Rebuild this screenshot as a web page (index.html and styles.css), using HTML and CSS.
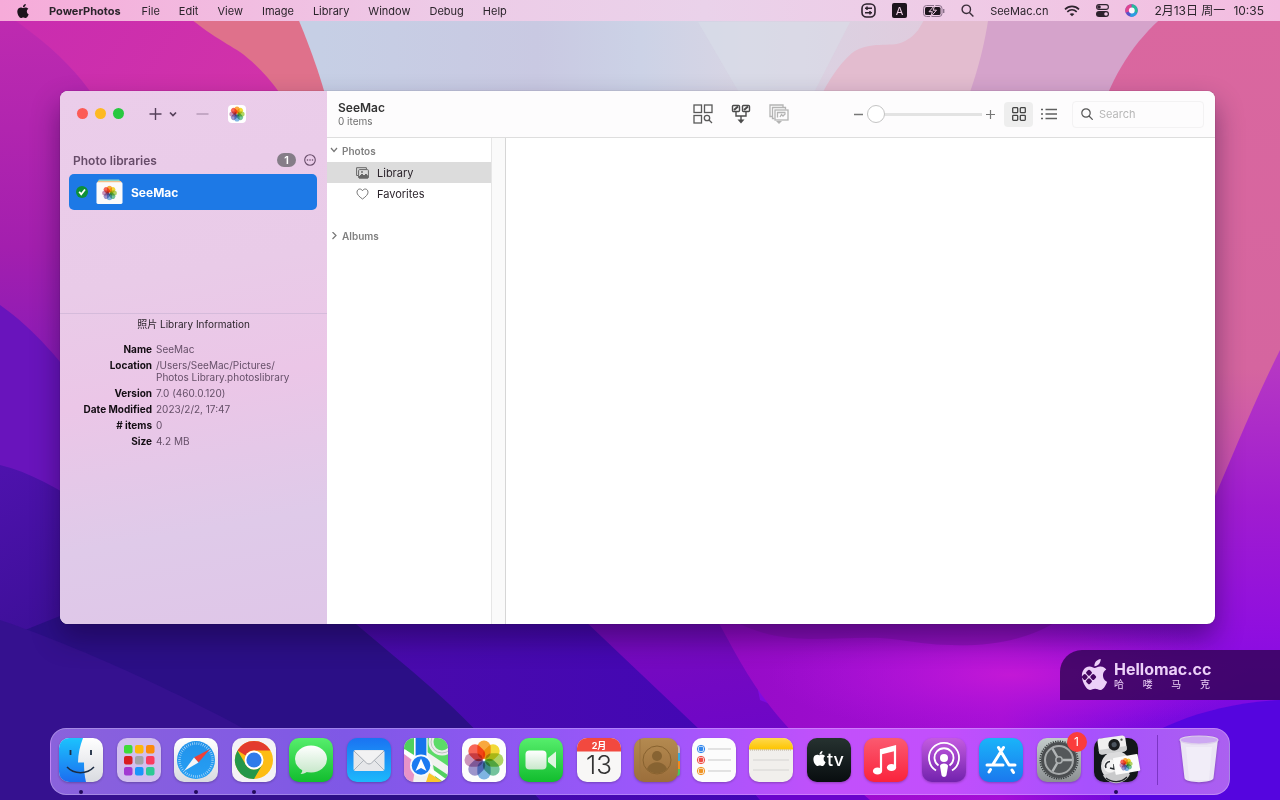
FILE: index.html
```html
<!DOCTYPE html>
<html lang="en">
<head>
    <meta charset="UTF-8">
    <meta name="viewport" content="width=device-width, initial-scale=1.0">
    <title>PowerPhotos</title>
    <link rel="stylesheet" href="styles.css">
</head>
<body>
    <!-- shared shapes and gradients -->
    <svg class="defs" width="0" height="0" aria-hidden="true">
        <defs>
            <linearGradient id="g-blue" x1="0" y1="0" x2="0" y2="1"><stop offset="0" stop-color="#1a73f2"/><stop offset="1" stop-color="#1db9fb"/></linearGradient>
            <linearGradient id="g-finder" x1="0" y1="0" x2="0" y2="1"><stop offset="0" stop-color="#1cc3fd"/><stop offset="1" stop-color="#1c6df0"/></linearGradient>
            <linearGradient id="g-white" x1="0" y1="0" x2="0" y2="1"><stop offset="0" stop-color="#ffffff"/><stop offset="1" stop-color="#d9dbe0"/></linearGradient>
            <linearGradient id="g-bubble" x1="0" y1="0" x2="0" y2="1"><stop offset="0" stop-color="#ffffff"/><stop offset="1" stop-color="#c8e8cb"/></linearGradient>
            <linearGradient id="g-green" x1="0" y1="0" x2="0" y2="1"><stop offset="0" stop-color="#56ee6c"/><stop offset="1" stop-color="#12bd2e"/></linearGradient>
            <linearGradient id="g-safari" x1="0" y1="0" x2="0" y2="1"><stop offset="0" stop-color="#2192ea"/><stop offset="1" stop-color="#269ff4"/></linearGradient>
            <linearGradient id="g-brown" x1="0" y1="0" x2="0" y2="1"><stop offset="0" stop-color="#b48a50"/><stop offset="1" stop-color="#9b6e3b"/></linearGradient>
            <linearGradient id="g-yellow" x1="0" y1="0" x2="0" y2="1"><stop offset="0" stop-color="#ffd94d"/><stop offset="1" stop-color="#fdc400"/></linearGradient>
            <linearGradient id="g-black" x1="0" y1="0" x2="0" y2="1"><stop offset="0" stop-color="#263230"/><stop offset="1" stop-color="#080d0f"/></linearGradient>
            <linearGradient id="g-red" x1="0" y1="0" x2="0" y2="1"><stop offset="0" stop-color="#fb5a70"/><stop offset="1" stop-color="#fa233c"/></linearGradient>
            <linearGradient id="g-purple" x1="0" y1="0" x2="0" y2="1"><stop offset="0" stop-color="#c35be0"/><stop offset="1" stop-color="#7222ad"/></linearGradient>
            <linearGradient id="g-store" x1="0" y1="0" x2="0" y2="1"><stop offset="0" stop-color="#1ab4f9"/><stop offset="1" stop-color="#1b78ee"/></linearGradient>
            <linearGradient id="g-grey" x1="0" y1="0" x2="0" y2="1"><stop offset="0" stop-color="#c3cccb"/><stop offset="1" stop-color="#8c9092"/></linearGradient>
            <symbol id="apple" viewBox="0 0 24 24">
                <path d="M12.152 6.896c-.948 0-2.415-1.078-3.96-1.04-2.04.027-3.91 1.183-4.961 3.014-2.117 3.675-.546 9.103 1.519 12.09 1.013 1.454 2.208 3.09 3.792 3.039 1.52-.065 2.09-.987 3.935-.987 1.831 0 2.35.987 3.96.948 1.637-.026 2.676-1.48 3.676-2.948 1.156-1.688 1.636-3.325 1.662-3.415-.039-.013-3.182-1.221-3.22-4.857-.026-3.04 2.48-4.494 2.597-4.559-1.429-2.09-3.623-2.324-4.39-2.376-2-.156-3.675 1.09-4.61 1.09zM15.53 3.83c.843-1.012 1.4-2.427 1.245-3.83-1.207.052-2.662.805-3.532 1.818-.78.896-1.454 2.338-1.273 3.714 1.338.104 2.715-.688 3.559-1.701"/>
            </symbol>
            <symbol id="flower" viewBox="-20 -20 40 40">
                <g class="petals">
                    <rect x="-6.500" y="-19" width="13" height="18" rx="6.500" fill="#fb9a1c"/>
                    <rect x="-6.500" y="-19" width="13" height="18" rx="6.500" fill="#f2d512" transform="rotate(45)"/>
                    <rect x="-6.500" y="-19" width="13" height="18" rx="6.500" fill="#a5cf4a" transform="rotate(90)"/>
                    <rect x="-6.500" y="-19" width="13" height="18" rx="6.500" fill="#5dbb8c" transform="rotate(135)"/>
                    <rect x="-6.500" y="-19" width="13" height="18" rx="6.500" fill="#6aa9e0" transform="rotate(180)"/>
                    <rect x="-6.500" y="-19" width="13" height="18" rx="6.500" fill="#8d84c4" transform="rotate(225)"/>
                    <rect x="-6.500" y="-19" width="13" height="18" rx="6.500" fill="#c583b0" transform="rotate(270)"/>
                    <rect x="-6.500" y="-19" width="13" height="18" rx="6.500" fill="#f84c3c" transform="rotate(315)"/>
                </g>
            </symbol>
        </defs>
    </svg>

    <!-- wallpaper -->
    <svg class="wallpaper" viewBox="0 0 1280 800" preserveAspectRatio="none" aria-hidden="true">
        <defs>
            <linearGradient id="w-top"><stop offset="0.25" stop-color="#c6cfe5"/><stop offset="0.42" stop-color="#c9c9e2"/><stop offset="0.5" stop-color="#ccd2e6"/><stop offset="0.58" stop-color="#d8d5e4"/><stop offset="0.77" stop-color="#e2c9dc"/></linearGradient>
            <linearGradient id="w-left" x1="0" y1="0" x2="0" y2="1"><stop offset="0" stop-color="#bf2bb0"/><stop offset="0.3" stop-color="#a31fae"/><stop offset="0.55" stop-color="#7a18bd"/><stop offset="1" stop-color="#5710b8"/></linearGradient>
            <linearGradient id="w-mag" x1="0" y1="0" x2="1" y2="1"><stop offset="0" stop-color="#c92cb0"/><stop offset="0.6" stop-color="#d233a8"/><stop offset="1" stop-color="#cf4b96"/></linearGradient>
            <linearGradient id="w-right" x1="0" y1="0" x2="0" y2="1"><stop offset="0" stop-color="#da679f"/><stop offset="0.45" stop-color="#d5659f"/><stop offset="0.7" stop-color="#c040bc"/><stop offset="1" stop-color="#a61ecf"/></linearGradient>
            <linearGradient id="w-low" x1="0" y1="0" x2="0" y2="1"><stop offset="0" stop-color="#b83ac2"/><stop offset="0.35" stop-color="#a01cd0"/><stop offset="0.7" stop-color="#8b0be3"/><stop offset="1" stop-color="#5b09d8"/></linearGradient>
            <linearGradient id="w-band"><stop offset="0" stop-color="#4a0bab"/><stop offset="1" stop-color="#4206b6"/></linearGradient>
            <linearGradient id="w-violet" x1="0" y1="0" x2="0.3" y2="1"><stop offset="0" stop-color="#7a0cba"/><stop offset="1" stop-color="#6a04cc"/></linearGradient>
            <linearGradient id="w-rose"><stop offset="0" stop-color="#950bc6"/><stop offset="0.6" stop-color="#a50ed6"/><stop offset="1" stop-color="#8b0be3" stop-opacity="0"/></linearGradient>
            <radialGradient id="w-glow"><stop offset="0" stop-color="#c318d6"/><stop offset="1" stop-color="#b014dc" stop-opacity="0"/></radialGradient>
            <linearGradient id="w-indigo" x1="0" y1="0" x2="0.5" y2="1"><stop offset="0" stop-color="#4e12ad"/><stop offset="1" stop-color="#290c80"/></linearGradient>
        </defs>
        <rect width="1280" height="800" fill="url(#w-top)"/>
        <path d="M698 22L755 120H800L850 22Z" fill="#d9dfe9" opacity=".5"/>
        <path d="M812 115C825 85 838 65 852 53C870 40 890 48 903 42C918 35 920 26 924 20H1000V120Z" fill="#e3bccf"/>
        <path d="M991 0C985 50 975 80 960 120V300H1280V0Z" fill="#d5a3cb"/>
        <path d="M1165 15C1135 40 1112 75 1098 120L1150 800H1280V15Z" fill="url(#w-right)"/>
        <path d="M0 0H290C310 45 322 80 332 120V500H0Z" fill="#df718b"/>
        <path d="M0 0H170C200 30 225 42 240 52C265 70 285 98 300 125V500H0Z" fill="url(#w-mag)"/>
        <path d="M0 10C60 50 100 90 120 150V800H0Z" fill="url(#w-left)"/>
        <path d="M0 305C35 330 60 360 90 400V800H0Z" fill="#6914bc"/>
        <path d="M1280 350C1255 400 1235 450 1205 520L700 600V800H1280Z" fill="url(#w-low)"/>
        <path d="M0 465C40 475 80 500 130 540L300 600V800H0Z" fill="url(#w-indigo)"/>
        <path d="M0 640L100 600H600L720 800H0Z" fill="#2b0f86"/>
        <path d="M0 620C60 640 180 690 300 760V800H0Z" fill="#35118f"/>
        <path d="M330 600C370 640 430 680 485 740L540 800H800L570 600Z" fill="url(#w-band)"/>
        <path d="M563 600L700 730L760 800H1000L760 700L740 600Z" fill="url(#w-violet)"/>
        <path d="M706 600C735 650 750 690 800 740L870 800H1200V600Z" fill="url(#w-rose)"/>
        <ellipse cx="1010" cy="675" rx="240" ry="60" fill="url(#w-glow)"/>
        <path d="M706 600C770 660 840 630 900 640S1040 650 1080 600Z" fill="#8010ac" opacity=".55"/>
        <path d="M1280 700C1200 705 1150 730 1110 760V800H1280Z" fill="#5505df"/>
    </svg>

    <header class="menubar">
        <nav class="menus">
            <button class="apple-menu" aria-label="Apple"><svg width="14" height="14"><use href="#apple"/></svg></button>
            <button class="app-name">PowerPhotos</button>
            <button>File</button>
            <button>Edit</button>
            <button>View</button>
            <button>Image</button>
            <button>Library</button>
            <button>Window</button>
            <button>Debug</button>
            <button>Help</button>
        </nav>
        <div class="status">
            <svg width="15" height="15" viewBox="0 0 15 15"><rect x="1" y="1" width="13" height="13" rx="4.500" fill="none" stroke="#2d222d" stroke-width="1.600"/><path d="M4 5.200h7M4 9.800h7" stroke="#2d222d" stroke-width="1.600"/><path d="M6 3.500v3.400M9 8.100v3.400" stroke="#2d222d" stroke-width="1.500"/></svg>
            <svg width="15" height="15" viewBox="0 0 15 15"><rect width="15" height="15" rx="2" fill="#1d151d"/><text x="7.500" y="11.500" text-anchor="middle" class="input-letter">A</text></svg>
            <svg width="22" height="12" viewBox="0 0 22 12"><rect x=".5" y=".5" width="18.500" height="11" rx="3" fill="none" stroke="#8a718a"/><rect x="2" y="2" width="15.500" height="8" rx="1.500" fill="#1d151d"/><path d="M20.700 4v4" stroke="#8a718a" stroke-width="1.400"/><path d="M12 0L6 6.700h3.400L7.500 12l6-6.800h-3.400z" fill="#1d151d" stroke="#f0cde6" stroke-width="1"/></svg>
            <svg width="13" height="13" viewBox="0 0 13 13" fill="none" stroke="#3a2d3a" stroke-width="1.400"><circle cx="5.300" cy="5.300" r="4.200"/><path d="M8.400 8.400l4 4"/></svg>
            <span>SeeMac.cn</span>
            <svg width="16" height="12" viewBox="0 0 16 12" fill="none" stroke="#2d222d" stroke-width="1.600"><path d="M1 4.400c4-4 10-4 14 0M3.300 6.800c2.800-2.600 6.600-2.600 9.400 0"/><path d="M5.600 9.100c1.500-1.300 3.300-1.300 4.800 0L8 11.300z" fill="#2d222d" stroke="none"/></svg>
            <svg width="13" height="13" viewBox="0 0 13 13"><rect x=".6" y=".6" width="11.800" height="4.800" rx="2.400" fill="none" stroke="#2d222d" stroke-width="1.100"/><circle cx="3" cy="3" r="1.800" fill="#2d222d"/><rect y="7" width="13" height="6" rx="3" fill="#2d222d"/><circle cx="10" cy="10" r="1.800" fill="#f0c8e4"/></svg>
            <svg width="13" height="13" viewBox="0 0 13 13"><circle cx="6.500" cy="6.500" r="6.200" fill="#5a51c9"/><path d="M6.500.3a6.200 6.200 0 0 1 5.500 9L6.500 6.500z" fill="#27b99b"/><path d="M6.500.3a6.200 6.200 0 0 0-5.800 8.400L6.500 6.500z" fill="#df4491"/><path d="M12 9.300a6.200 6.200 0 0 1-7 3.200L6.500 6.500z" fill="#2a9fe2"/><circle cx="6.800" cy="6.500" r="2.900" fill="#fbf4fd"/></svg>
            <span class="clock"><span>2月13日 周一</span><span>10:35</span></span>
        </div>
    </header>

    <main class="window">
        <aside class="sidebar">
            <div class="sidebar-tools">
                <div class="lights">
                    <button class="light close" aria-label="Close"></button>
                    <button class="light minimize" aria-label="Minimize"></button>
                    <button class="light zoom" aria-label="Zoom"></button>
                </div>
                <button class="add" aria-label="Add library"><svg width="28" height="14" viewBox="0 0 28 14" fill="none" stroke="#55405a" stroke-width="1.400"><path d="M6.500 1v12M.5 7h12"/><path d="M21 5.500l3 3 3-3" stroke-width="1.700"/></svg></button>
                <button aria-label="Remove library"><svg width="13" height="14" viewBox="0 0 13 14"><path d="M.5 7h12" stroke="#b79bb8" stroke-width="1.400"/></svg></button>
                <button class="photos-button" aria-label="Open Photos"><svg width="16" height="16"><use href="#flower"/></svg></button>
            </div>

            <section class="libraries">
                <div class="libraries-head">
                    <h2>Photo libraries</h2>
                    <span class="count">1</span>
                    <button aria-label="More"><svg width="12" height="12" viewBox="0 0 12 12"><circle cx="6" cy="6" r="5.300" fill="none" stroke="#674c69" stroke-width="1.100"/><circle cx="3.500" cy="6" r=".8" fill="#674c69"/><circle cx="6" cy="6" r=".8" fill="#674c69"/><circle cx="8.500" cy="6" r=".8" fill="#674c69"/></svg></button>
                </div>
                <button class="library-row">
                    <svg width="12" height="12" viewBox="0 0 12 12"><circle cx="6" cy="6" r="6" fill="#0d9038"/><path d="M3.200 5.800l2 2.600L9 3.500" fill="none" stroke="#fff" stroke-width="1.800"/></svg>
                    <svg width="27" height="26" viewBox="0 0 28 26"><path d="M3 0h21l2 4H1z" fill="#87d6c6"/><path d="M2 1.500h24l1 4H1z" fill="#f3c08a"/><rect x=".5" y="3" width="27" height="22.500" rx="1.500" fill="#fbfafa"/><use href="#flower" x="6" y="6" width="16" height="16"/></svg>
                    <span>SeeMac</span>
                </button>
            </section>

            <section class="info">
                <h3>照片 Library Information</h3>
                <dl>
                    <dt>Name</dt><dd>SeeMac</dd>
                    <dt>Location</dt><dd>/Users/SeeMac/Pictures/<br>Photos Library.photoslibrary</dd>
                    <dt>Version</dt><dd>7.0 (460.0.120)</dd>
                    <dt>Date Modified</dt><dd>2023/2/2, 17:47</dd>
                    <dt># items</dt><dd>0</dd>
                    <dt>Size</dt><dd>4.2 MB</dd>
                </dl>
            </section>
        </aside>

        <div class="main">
            <div class="toolbar">
                <div class="title">
                    <h1>SeeMac</h1>
                    <p>0 items</p>
                </div>
                <div class="actions">
                    <button aria-label="Find duplicates"><svg width="20" height="20" viewBox="0 0 20 20" fill="none" stroke="#595959" stroke-width="1.300"><rect x="1" y="1" width="7.500" height="7.500"/><rect x="11.500" y="1" width="7.500" height="7.500"/><rect x="1" y="11.500" width="7.500" height="7.500"/><circle cx="14" cy="14" r="2.700"/><path d="M16 16l3 3"/></svg></button>
                    <button aria-label="Merge libraries"><svg width="20" height="20" viewBox="0 0 20 20" fill="none" stroke="#4b4b4b" stroke-width="1.400"><rect x="1.500" y="1.500" width="7" height="6" rx="1"/><rect x="11.500" y="1.500" width="7" height="6" rx="1"/><path d="M3 6l4-3.500M13 6l4-3.500" stroke-width="2"/><path d="M5 8v4h10V8M10 12v4"/><path d="M6.500 15.500h7L10 19.500z" fill="#4b4b4b" stroke="none"/></svg></button>
                    <button aria-label="Export" disabled><svg width="20" height="20" viewBox="0 0 20 20" fill="none" stroke="#b4b4b4" stroke-width="1.300"><path d="M3 12.500H1V1h13v2M5.500 14.500h-2v-11h13v2"/><rect x="6" y="6" width="13" height="10"/><path d="M8.500 13.500v-5h8M11 13l1.500-2.500L14 12l2.500-2.500"/><path d="M7 17h6l-3 3z" fill="#b4b4b4" stroke="none"/></svg></button>
                </div>
                <div class="size-slider">
                    <svg width="9" height="9" viewBox="0 0 9 9"><path d="M0 4.500h9" stroke="#777" stroke-width="1.300"/></svg>
                    <input type="range" min="0" max="100" value="0" aria-label="Thumbnail size">
                    <svg width="9" height="9" viewBox="0 0 9 9"><path d="M0 4.500h9M4.500 0v9" stroke="#777" stroke-width="1.200"/></svg>
                </div>
                <div class="views">
                    <button class="active" aria-label="Grid view"><svg width="14" height="14" viewBox="0 0 14 14" fill="none" stroke="#444" stroke-width="1.300"><rect x=".7" y=".7" width="5" height="5" rx=".8"/><rect x="8.300" y=".7" width="5" height="5" rx=".8"/><rect x=".7" y="8.300" width="5" height="5" rx=".8"/><rect x="8.300" y="8.300" width="5" height="5" rx=".8"/></svg></button>
                    <button aria-label="List view"><svg width="16" height="12" viewBox="0 0 16 12" stroke="#606060" stroke-width="1.300"><path d="M0 1.500h2M0 6h2M0 10.500h2M4.500 1.500H16M4.500 6H16M4.500 10.500H16"/></svg></button>
                </div>
                <label class="search">
                    <svg width="12" height="12" viewBox="0 0 12 12" fill="none" stroke="#555" stroke-width="1.200"><circle cx="5" cy="5" r="4.200"/><path d="M8 8l3.700 3.700"/></svg>
                    <input type="search" placeholder="Search" aria-label="Search">
                </label>
            </div>
            <div class="content">
                <nav class="tree">
                    <button class="group"><svg width="8" height="8" viewBox="0 0 8 8"><path d="M1 1l3 3.500L7 1" fill="none" stroke="#777" stroke-width="1.200"/></svg>Photos</button>
                    <button class="item selected"><svg width="13" height="12" viewBox="0 0 13 12" fill="none" stroke="#666" stroke-width="1"><path d="M2 8.500H.6V.7h9.800V2"/><rect x="2.600" y="2.600" width="9.800" height="8.400" rx="1"/><path d="M3 10l3-3 2 2 2-2 2 2.500V11H3z" fill="#666"/><circle cx="6" cy="5" r=".6"/></svg>Library</button>
                    <button class="item"><svg width="13" height="12" viewBox="0 0 13 12"><path d="M6.500 11C3 8.500 1 6.500 1 4.200 1 2.300 2.300 1 3.800 1c1.200 0 2.200.7 2.700 1.800C7 1.700 8 1 9.200 1 10.700 1 12 2.300 12 4.200c0 2.300-2 4.300-5.500 6.800z" fill="none" stroke="#777" stroke-width="1"/></svg>Favorites</button>
                    <button class="group albums"><svg width="8" height="8" viewBox="0 0 8 8"><path d="M2.500 0L6 3.500 2.500 7" fill="none" stroke="#777" stroke-width="1.200"/></svg>Albums</button>
                </nav>
                <div class="gutter"></div>
                <div class="photos"></div>
            </div>
        </div>
    </main>

    <a class="watermark" href="#">
        <svg width="30" height="32" viewBox="0 0 30 32"><use href="#apple" x="-1" y="0" width="31" height="31" fill="#ecd0f8"/><g transform="rotate(45 9 18)" fill="#450760"><rect x="3.500" y="12.500" width="5" height="5" rx="1.500"/><rect x="9.500" y="12.500" width="5" height="5" rx="1.500"/><rect x="3.500" y="18.500" width="5" height="5" rx="1.500"/><rect x="9.500" y="18.500" width="5" height="5" rx="1.500"/></g></svg>
        <span class="brand">
            <strong>Hellomac.cc</strong>
            <span class="brand-cn"><span>哈</span><span>喽</span><span>马</span><span>克</span></span>
        </span>
    </a>

    <nav class="dock">
        <div class="apps">
            <button class="app running" aria-label="Finder"><svg viewBox="0 0 44 44"><rect width="44" height="44" rx="10" fill="url(#g-white)"/><path d="M10 0h14c-3 8-5 16-5 24.500h6c0 7 .5 13 2 19.500H10A10 10 0 0 1 0 34V10A10 10 0 0 1 10 0z" fill="url(#g-finder)"/><path d="M11.500 12v5M32 12v5" stroke="#1c2c42" stroke-width="1.800"/><path d="M8 29c7 7.500 20 7.500 27 0" fill="none" stroke="#1c2c42" stroke-width="1.500"/></svg></button>
            <button class="app" aria-label="Launchpad"><svg viewBox="0 0 44 44"><rect width="44" height="44" rx="10" fill="#d2bfef"/><g><rect x="7" y="7" width="8.500" height="8.500" rx="2" fill="#3edb39"/><rect x="18" y="7" width="8.500" height="8.500" rx="2" fill="#fdb70b"/><rect x="29" y="7" width="8.500" height="8.500" rx="2" fill="#fc8a0c"/><rect x="7" y="18" width="8.500" height="8.500" rx="2" fill="#d91d22"/><rect x="18" y="18" width="8.500" height="8.500" rx="2" fill="#a3a3a8"/><rect x="29" y="18" width="8.500" height="8.500" rx="2" fill="#fa3a60"/><rect x="7" y="29" width="8.500" height="8.500" rx="2" fill="#a239d3"/><rect x="18" y="29" width="8.500" height="8.500" rx="2" fill="#1a95fb"/><rect x="29" y="29" width="8.500" height="8.500" rx="2" fill="#2dc994"/></g></svg></button>
            <button class="app running" aria-label="Safari"><svg viewBox="0 0 44 44"><rect width="44" height="44" rx="10" fill="url(#g-white)"/><circle cx="22" cy="22" r="19" fill="url(#g-safari)"/><circle cx="22" cy="22" r="16.500" fill="none" stroke="#b5dcf8" stroke-width="2.500" stroke-dasharray=".7 1.460"/><path d="M36 11L24.500 24.500l-4.500-5z" fill="#ef4038"/><path d="M10 33l10-13.500 4.500 5z" fill="#f3f5f8"/></svg></button>
            <button class="app running" aria-label="Chrome"><svg viewBox="0 0 44 44"><rect width="44" height="44" rx="10" fill="#f4f2f6"/><circle cx="22" cy="22" r="19" fill="#fdbd14"/><path d="M5.500 12.500A19 19 0 0 1 38.500 12.500H22a9.500 9.500 0 0 0-8.300 5z" fill="#e33b2e"/><path d="M5.500 12.500A19 19 0 0 0 22 41l8.300-14.300A9.500 9.500 0 0 1 13.800 26.700z" fill="#24974a"/><circle cx="22" cy="22" r="9.500" fill="#fff"/><circle cx="22" cy="22" r="7.600" fill="#2f7bea"/></svg></button>
            <button class="app" aria-label="Messages"><svg viewBox="0 0 44 44"><rect width="44" height="44" rx="10" fill="url(#g-green)"/><ellipse cx="22" cy="21" rx="16" ry="13.500" fill="url(#g-bubble)"/><path d="M13 31c1 2-.5 4-1.500 5 3.500 0 6-1.500 8-3.500z" fill="#cfeacf"/></svg></button>
            <button class="app" aria-label="Mail"><svg viewBox="0 0 44 44"><rect width="44" height="44" rx="10" fill="url(#g-blue)"/><rect x="6.500" y="12" width="31" height="21" rx="2" fill="#e6e7ea"/><path d="M7 32l11-11M37 32L26 21" stroke="#aeb4bb" stroke-width="1"/><path d="M7 13l12.500 12c1.500 1.300 3.500 1.300 5 0L37 13" fill="#f2f2f3" stroke="#a6abb2" stroke-width="1"/></svg></button>
            <button class="app" aria-label="Maps"><svg viewBox="0 0 44 44"><clipPath id="c-maps"><rect width="44" height="44" rx="10"/></clipPath><g clip-path="url(#c-maps)"><rect width="44" height="44" fill="#f2f2f0"/><path d="M0 0h10v17L0 11z" fill="#50d05f"/><path d="M23 0h21v28L23 14z" fill="#5cdb68"/><path d="M29 27l15 10v7H32z" fill="#53cf61"/><path d="M0 16l12 9-3 19H0z" fill="#e793c8"/><path d="M0 13l44 32" stroke="#fff" stroke-width="4"/><path d="M25 35l14 9H22z" fill="#fbc62c"/><circle cx="38" cy="4" r="11" fill="none" stroke="#ececec" stroke-width="5"/><circle cx="38" cy="4" r="11" fill="none" stroke="#b9c4bb" stroke-width="1"/><path d="M11 0h12v30H11z" fill="#1574ec"/><path d="M11 0v20M23 0v20" stroke="#fff" stroke-width="1.200"/></g><circle cx="17" cy="27.500" r="11" fill="#f6fafd"/><circle cx="17" cy="27.500" r="9.300" fill="#1b7af1"/><path d="M17 20.500l5.500 12.500-5.500-3-5.500 3z" fill="#fff"/></svg></button>
            <button class="app" aria-label="Photos"><svg viewBox="0 0 44 44"><rect width="44" height="44" rx="10" fill="#fdfdfd"/><use href="#flower" x="1.500" y="1.500" width="41" height="41"/></svg></button>
            <button class="app" aria-label="FaceTime"><svg viewBox="0 0 44 44"><rect width="44" height="44" rx="10" fill="url(#g-green)"/><rect x="6.500" y="12.500" width="21" height="19" rx="4" fill="url(#g-bubble)"/><path d="M29 20l8-6.500v17L29 24z" fill="#ddf5df"/></svg></button>
            <button class="app" aria-label="Calendar"><svg viewBox="0 0 44 44"><rect width="44" height="44" rx="10" fill="#f8f7f6"/><path d="M0 13.500V10A10 10 0 0 1 10 0h24a10 10 0 0 1 10 10v3.500z" fill="#f2493f"/><text x="22" y="10.500" text-anchor="middle" class="cal-month">2月</text><text x="22" y="36" text-anchor="middle" class="cal-day">13</text></svg></button>
            <button class="app" aria-label="Contacts"><svg viewBox="0 0 44 44"><path d="M40 7h3q3 0 3 4v4h-6z" fill="#bfb8b5"/><path d="M40 15h6v8h-6z" fill="#37a9dd"/><path d="M40 23h6v8h-6z" fill="#f18b1e"/><path d="M40 31h6v4q0 3-3 3h-3z" fill="#48c55c"/><rect width="44" height="44" rx="10" fill="url(#g-brown)"/><path d="M6 1v42" stroke="#9d7440" stroke-width="1"/><circle cx="23" cy="22" r="14" fill="none" stroke="#88622f" stroke-width="1"/><circle cx="23" cy="18" r="5" fill="#876332"/><path d="M13 31c3-9 17-9 20 0a14 14 0 0 1-20 0z" fill="#876332"/></svg></button>
            <button class="app" aria-label="Reminders"><svg viewBox="0 0 44 44"><rect width="44" height="44" rx="10" fill="#fcfcfc"/><g fill="none" stroke-width="1"><circle cx="9" cy="11" r="3.700" stroke="#3287ed"/><circle cx="9" cy="22" r="3.700" stroke="#ef4c45"/><circle cx="9" cy="33" r="3.700" stroke="#ef9424"/><path d="M16 11h23M16 22h23M16 33h23" stroke="#c9c9c9"/></g><circle cx="9" cy="11" r="2.400" fill="#3287ed"/><circle cx="9" cy="22" r="2.400" fill="#ef4c45"/><circle cx="9" cy="33" r="2.400" fill="#ef9424"/></svg></button>
            <button class="app" aria-label="Notes"><svg viewBox="0 0 44 44"><rect width="44" height="44" rx="10" fill="#f1efec"/><path d="M0 11.500V10A10 10 0 0 1 10 0h24a10 10 0 0 1 10 10v1.500z" fill="url(#g-yellow)"/><path d="M1 12h42" stroke="#b5aa98" stroke-width="1" stroke-dasharray="1 1"/><path d="M4 22h36M4 32h36" stroke="#d5d4d2"/></svg></button>
            <button class="app" aria-label="Apple TV"><svg viewBox="0 0 44 44"><rect width="44" height="44" rx="10" fill="url(#g-black)"/><use href="#apple" x="5" y="13" width="15" height="15" fill="#fff"/><text x="20" y="28" class="tv-text">tv</text></svg></button>
            <button class="app" aria-label="Music"><svg viewBox="0 0 44 44"><rect width="44" height="44" rx="10" fill="url(#g-red)"/><path d="M17 33V12l14-3.500v21" fill="none" stroke="#fff" stroke-width="2.200"/><path d="M17 11.500L31 8v5l-14 3.500z" fill="#fff"/><ellipse cx="13.500" cy="33" rx="4.600" ry="3.600" fill="#fff"/><ellipse cx="27.500" cy="29.500" rx="4.600" ry="3.600" fill="#fff"/></svg></button>
            <button class="app" aria-label="Podcasts"><svg viewBox="0 0 44 44"><rect width="44" height="44" rx="10" fill="url(#g-purple)"/><path d="M14 32.500a15 15 0 1 1 16 0M16.500 27.500a9.500 9.500 0 1 1 11 0" fill="none" stroke="#fff" stroke-width="1.800"/><circle cx="22" cy="20" r="4" fill="#fff"/><path d="M18 28c0-3.500 8-3.500 8 0l-1.500 9c-.5 2.500-4.500 2.500-5 0z" fill="#fff"/></svg></button>
            <button class="app" aria-label="App Store"><svg viewBox="0 0 44 44"><rect width="44" height="44" rx="10" fill="url(#g-store)"/><path d="M19.500 9.500L30 27M33 32l1.500 2.500M24.500 9.500L13.500 27M11.500 31.500L10 34M8 27h16M31 27h5" stroke="#fff" stroke-width="3" stroke-linecap="round"/></svg></button>
            <button class="app" aria-label="System Preferences"><svg viewBox="0 0 44 44"><rect width="44" height="44" rx="10" fill="url(#g-grey)"/><circle cx="22" cy="22" r="18" fill="#4a4d4f"/><circle cx="22" cy="22" r="18.800" fill="none" stroke="#34383a" stroke-width="1.500" stroke-dasharray="1.200 1.200"/><circle cx="22" cy="22" r="14" fill="#54585a" stroke="#a7aaab" stroke-width="2"/><path d="M22 22h13M22 22l-6.500-11.300M22 22l-6.500 11.300" stroke="#b2b6b7" stroke-width="2.400"/><circle cx="22" cy="22" r="3.200" fill="#54585a" stroke="#a9adae" stroke-width="1.500"/></svg><span class="badge">1</span></button>
            <button class="app running" aria-label="PowerPhotos"><svg viewBox="0 0 44 44"><rect width="44" height="44" rx="10" fill="#13171a"/><circle cx="22" cy="28" r="15" fill="#dcdcdd"/><path d="M9 37c5 11 22 11 27-1l-8-4z" fill="#c9cacb"/><path d="M12 40c6 5 15 5 21-1" fill="none" stroke="#23272b" stroke-width="1.200"/><circle cx="16" cy="28" r="6.500" fill="#f3f3f3"/><path d="M12 30a4.500 4.500 0 0 1 4-6.500M20 26v5l-4-1" fill="none" stroke="#23272b" stroke-width="1.500"/><g transform="rotate(-8 18 6)"><rect x="4" y="-1" width="28" height="16" rx="3" fill="#f0f0f0"/><path d="M4 10h28v2a3 3 0 0 1-3 3H7a3 3 0 0 1-3-3z" fill="#cfd0d1"/><circle cx="20" cy="7" r="5.800" fill="#1b1d20"/><circle cx="20" cy="7" r="2.600" fill="#4c5560"/><circle cx="28" cy="3" r="1.200" fill="#555"/></g><g transform="rotate(-10 32 26)"><rect x="20" y="18" width="25" height="17" rx="1" fill="#fbfbfb"/><use href="#flower" x="25" y="19.500" width="14" height="14"/></g></svg></button>
        </div>
        <div class="divider"></div>
        <button class="app trash" aria-label="Trash"><svg viewBox="0 0 44 50"><path d="M3 4l4.500 39c.5 5.500 28.500 5.500 29 0L41 4z" fill="#ebe5f4"/><path d="M9 12l3 33h20l3-33z" fill="#f5f2fa" opacity=".6"/><ellipse cx="22" cy="5" rx="19" ry="4" fill="#cda8f2" stroke="#ddd0ea" stroke-width="1.200"/></svg></button>
    </nav>
</body>
</html>
```
FILE: styles.css
```css
* {
    box-sizing: border-box;
}

body {
    margin: 0;
    height: 100vh;
    display: flex;
    flex-direction: column;
    overflow: hidden;
    font-family: Inter, "Noto Sans CJK SC", sans-serif;
    font-size: 12px;
    color: #2b242b;
}

button {
    border: none;
    background: none;
    padding: 0;
    margin: 0;
    font: inherit;
    color: inherit;
    display: flex;
    align-items: center;
}

h1, h2, h3, p, dl, dd {
    margin: 0;
}

svg {
    display: block;
    flex: none;
}

.defs {
    position: absolute;
}

.petals rect {
    mix-blend-mode: multiply;
    opacity: 0.85;
}

.wallpaper {
    position: absolute;
    inset: 0;
    width: 100%;
    height: 100%;
    z-index: -1;
}

/* menu bar */
.menubar {
    height: 21px;
    flex: none;
    display: flex;
    align-items: center;
    justify-content: space-between;
    padding: 0 16px;
    background: linear-gradient(90deg, #f6abd9, #edcbe7 35%, #ead2ea 55%, #efcbe6 75%, #f3bce0);
    font-size: 11px;
}

.menus {
    display: flex;
    align-items: center;
    gap: 19px;
}

.apple-menu svg {
    fill: #1c141c;
}

.app-name {
    margin-right: 2px;
    font-weight: 700;
}

.status {
    display: flex;
    align-items: center;
    gap: 16px;
}

.input-letter {
    font-size: 11px;
    fill: #f3d3e8;
}

.clock {
    display: flex;
    gap: 8px;
    font-size: 12px;
    line-height: 20px;
}

/* window */
.window {
    flex: 1;
    min-height: 0;
    margin: 70px 65px 104px 60px;
    display: flex;
    border-radius: 8px;
    overflow: hidden;
    background: #fff;
    box-shadow: 0 0 1px rgba(0, 0, 0, 0.5), 0 14px 28px rgba(20, 0, 50, 0.45);
}

.sidebar {
    width: 267px;
    flex: none;
    display: flex;
    flex-direction: column;
    background: linear-gradient(170deg, #ebcdea, #e9cbe8 35%, #ebc6e7 55%, #dfcae9 80%, #dfc6e8);
}

.sidebar-tools {
    height: 45px;
    padding: 0 17px;
    display: flex;
    align-items: center;
}

.lights {
    display: flex;
    gap: 7px;
    margin-right: 25px;
}

.light {
    width: 11px;
    height: 11px;
    border-radius: 50%;
}

.close {
    background: #fc5b57;
}

.minimize {
    background: #fdb923;
}

.zoom {
    background: #28c840;
}

.add {
    margin-right: 19px;
}

.photos-button {
    margin-left: 19px;
    width: 18px;
    height: 18px;
    justify-content: center;
    border-radius: 4px;
    background: #fff;
}

.libraries {
    height: 178px;
    padding: 14px 10px 0 9px;
    border-bottom: 1px solid #d5bbdb;
}

.libraries-head {
    height: 20px;
    display: flex;
    align-items: center;
    padding: 0 1px 0 4px;
    color: #674c69;
}

.libraries-head h2 {
    flex: 1;
    font-size: 12px;
    font-weight: 600;
}

.count {
    width: 19px;
    height: 14px;
    margin-right: 8px;
    border-radius: 7px;
    background: #857d88;
    color: #fff;
    font-size: 11px;
    font-weight: 600;
    line-height: 14px;
    text-align: center;
}

.library-row {
    width: 100%;
    height: 36px;
    margin-top: 4px;
    padding: 0 7px;
    gap: 8px;
    border-radius: 5px;
    background: #1d79e6;
    color: #fff;
    font-size: 12px;
    font-weight: 700;
}

.info {
    font-size: 10px;
    line-height: 12px;
}

.info h3 {
    margin: 4px 0 13px;
    font-size: 10px;
    font-weight: 400;
    text-align: center;
}

.info dl {
    display: grid;
    grid-template-columns: 92px 1fr;
    gap: 4px;
}

.info dt {
    text-align: right;
    font-weight: 700;
    color: #120c12;
}

.info dd {
    color: #654f68;
}

/* right side */
.main {
    flex: 1;
    min-width: 0;
    display: flex;
    flex-direction: column;
}

.toolbar {
    height: 47px;
    flex: none;
    display: flex;
    align-items: center;
    padding: 0 11px;
    background: #fdfcfd;
    border-bottom: 1px solid #dedede;
}

.title {
    flex: 1;
}

.title h1 {
    font-size: 12px;
    line-height: 14px;
    font-weight: 600;
    color: #333;
}

.title p {
    font-size: 10px;
    line-height: 12px;
    color: #707070;
}

.actions {
    display: flex;
    gap: 18px;
    margin-right: 65px;
}

.size-slider {
    display: flex;
    align-items: center;
    gap: 4px;
    margin-right: 9px;
}

.size-slider input {
    appearance: none;
    width: 115px;
    height: 18px;
    margin: 0;
    background: linear-gradient(#e3e3e3, #e3e3e3) center / 100% 3px no-repeat;
}

.size-slider input::-webkit-slider-thumb {
    appearance: none;
    width: 18px;
    height: 18px;
    border: 1px solid #c4c4c4;
    border-radius: 50%;
    background: #fff;
}

.views {
    display: flex;
    gap: 1px;
    margin-right: 9px;
}

.views button {
    width: 29px;
    height: 25px;
    justify-content: center;
    border-radius: 4px;
}

.views .active {
    background: #eeeeee;
}

.search {
    width: 132px;
    height: 27px;
    display: flex;
    align-items: center;
    gap: 6px;
    padding: 0 8px;
    border: 1px solid #f3f2f3;
    border-radius: 4px;
}

.search input {
    flex: 1;
    min-width: 0;
    border: none;
    padding: 0;
    background: none;
    font: inherit;
    font-size: 11px;
}

.search input::placeholder {
    color: #b7b7b7;
}

.content {
    flex: 1;
    display: flex;
}

.tree {
    width: 165px;
    padding-top: 2px;
    border-right: 1px solid #e6e6e6;
}

.group {
    height: 22px;
    padding-left: 3px;
    gap: 4px;
    font-size: 10px;
    font-weight: 600;
    color: #808080;
}

.albums {
    margin-top: 21px;
}

.item {
    width: 100%;
    height: 21px;
    padding-left: 29px;
    gap: 8px;
    font-size: 11px;
}

.selected {
    background: #dcdcdc;
}

.gutter {
    width: 14px;
    background: #fafafa;
    border-right: 1px solid #d6d6d6;
}

.photos {
    flex: 1;
}

/* watermark in the corner */
.watermark {
    position: absolute;
    right: 0;
    bottom: 100px;
    width: 220px;
    height: 50px;
    display: flex;
    align-items: center;
    gap: 4px;
    padding-left: 20px;
    border-radius: 22px 0 0 0;
    background: rgba(48, 4, 82, 0.8);
    color: #ecd0f8;
    text-decoration: none;
}

.brand {
    width: 96px;
    display: flex;
    flex-direction: column;
}

.brand strong {
    font-size: 16px;
    line-height: 19px;
    font-weight: 700;
}

.brand-cn {
    display: flex;
    justify-content: space-between;
    font-size: 10px;
    line-height: 11px;
}

/* dock */
.dock {
    height: 67px;
    flex: none;
    margin: 0 50px 5px;
    padding: 0 8px 4px;
    display: flex;
    align-items: center;
    border: 1px solid rgba(255, 255, 255, 0.25);
    border-radius: 16px;
    background: linear-gradient(90deg, #8a62dc, #7f58e6 25%, #9b57fb 50%, #c250fb 66%, #c24ffc 76%, #a751fd 88%, #ab60f0);
}

.apps {
    flex: 1;
    display: flex;
    justify-content: space-between;
}

.app {
    position: relative;
    width: 44px;
    height: 44px;
}

.app svg {
    width: 44px;
    height: 44px;
    overflow: visible;
    filter: drop-shadow(0 1px 1px rgba(0, 0, 0, 0.25));
}

.running::after {
    content: "";
    position: absolute;
    left: 20px;
    bottom: -12px;
    width: 4px;
    height: 4px;
    border-radius: 50%;
    background: #220a5c;
}

.badge {
    position: absolute;
    top: -6px;
    right: -6px;
    width: 20px;
    height: 20px;
    border-radius: 50%;
    background: #fb3c3c;
    color: #fff;
    line-height: 20px;
    text-align: center;
}

.cal-month {
    font-size: 9px;
    font-weight: 700;
    fill: #fff;
}

.cal-day {
    font-size: 26px;
    font-weight: 300;
    fill: #333;
}

.tv-text {
    font-size: 18px;
    font-weight: 500;
    fill: #fff;
}

.divider {
    width: 1px;
    height: 50px;
    margin: 0 19px;
    background: #7c35c4;
}

.trash svg {
    height: 50px;
}
```
